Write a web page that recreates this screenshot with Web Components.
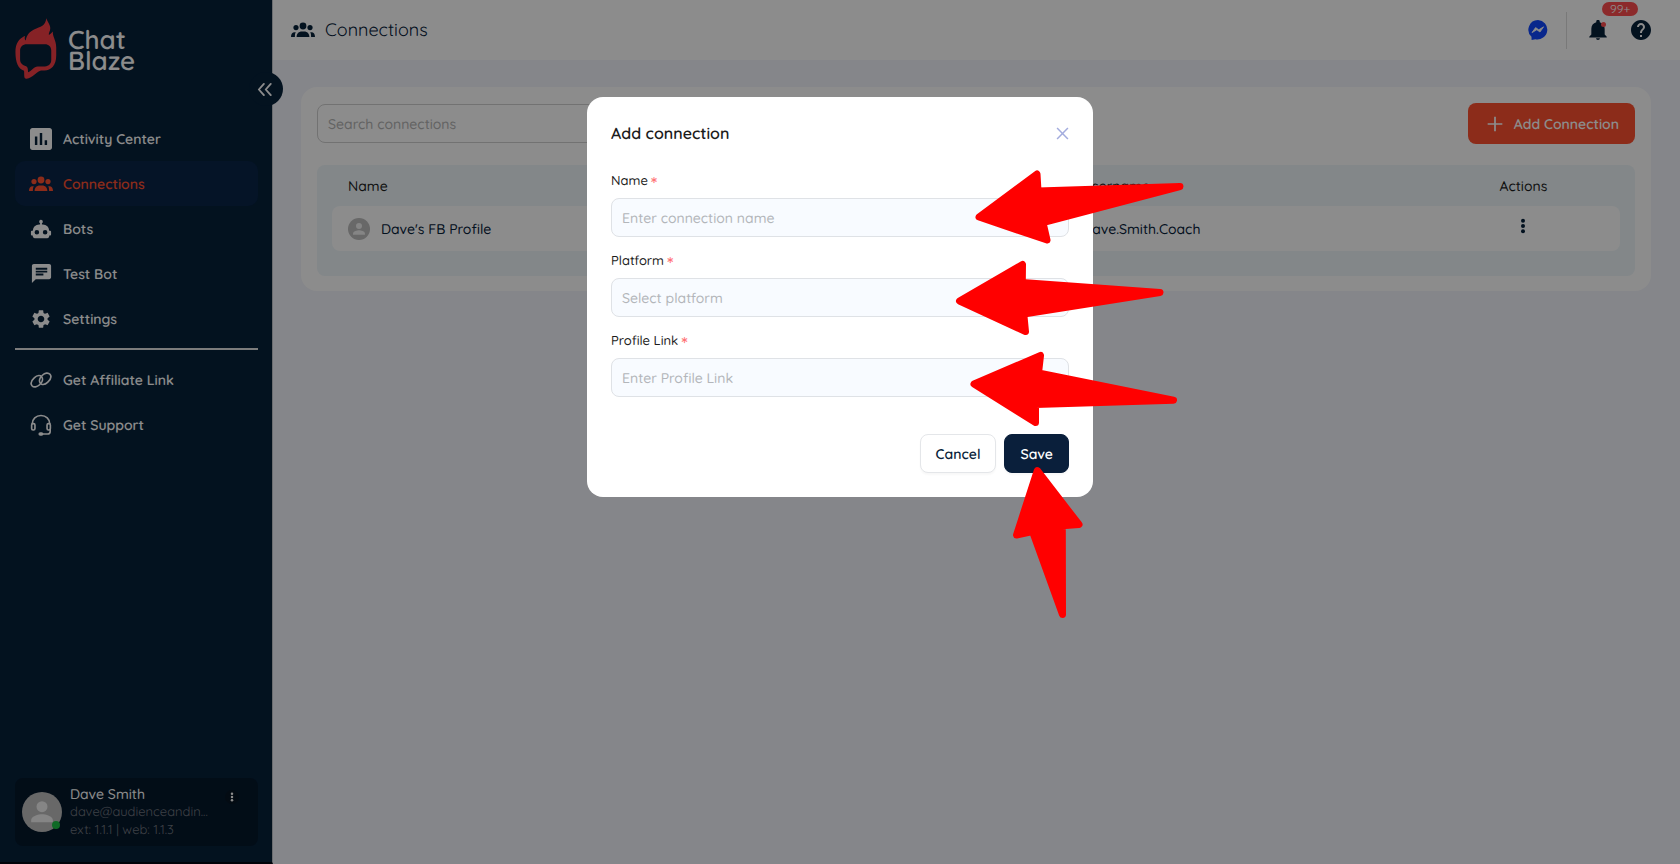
<!DOCTYPE html>
<html lang="en">
<head>
<meta charset="utf-8">
<meta name="viewport" content="width=device-width, initial-scale=1">
<title>Chat Blaze - Connections</title>
<style>
    :root {
        --navy: #0a1f3b;
        --sidebar: #06213a;
        --accent: #ff5130;
        --danger: #ff4d4f;
        --page: #f3f4fb;
        --panel: #eef6fa;
        --line: #dfe2e6;
    }

    body {
        margin: 0;
        font-family: Quicksand, Lato, sans-serif;
        font-size: 14px;
        line-height: 20px;
        text-rendering: geometricPrecision;
        color: #1c1c1c;
        background: var(--page);
    }
</style>
</head>
<body>
<blaze-app></blaze-app>

<script>
(function () {

    const ICONS = {
        chart: ['3 3 18 18', '<path d="M19 3H5c-1.1 0-2 .9-2 2v14c0 1.1.9 2 2 2h14c1.1 0 2-.9 2-2V5c0-1.1-.9-2-2-2zM9 17H7v-7h2v7zm4 0h-2V7h2v10zm4 0h-2v-4h2v4z"/>'],
        people: ['0 0 24 24', '<circle cx="12" cy="8" r="3.4"/><circle cx="5" cy="9.6" r="2.6"/><circle cx="19" cy="9.6" r="2.6"/><path d="M5.6 19c0-3.3 2.2-5.4 5.2-5.4h2.4c3 0 5.2 2.1 5.2 5.4zM0 19c0-3 1.3-4.8 3.6-4.8h1.2C4 15.4 3.9 17 3.9 19zM24 19c0-3-1.3-4.8-3.6-4.8h-1.2c.8 1.2.9 2.8.9 4.8z"/>'],
        robot: ['0 0 24 24', '<path d="M12 2a2 2 0 0 1 2 2c0 .74-.4 1.39-1 1.73V7h1a7 7 0 0 1 7 7h1a1 1 0 0 1 1 1v3a1 1 0 0 1-1 1h-1v1a2 2 0 0 1-2 2H5a2 2 0 0 1-2-2v-1H2a1 1 0 0 1-1-1v-3a1 1 0 0 1 1-1h1a7 7 0 0 1 7-7h1V5.73A2 2 0 0 1 12 2M7.5 13a2.5 2.5 0 1 0 0 5 2.5 2.5 0 0 0 0-5m9 0a2.5 2.5 0 1 0 0 5 2.5 2.5 0 0 0 0-5z"/>'],
        chat: ['0 0 24 24', '<path d="M20 2H4c-1.1 0-2 .9-2 2v18l4-4h14c1.1 0 2-.9 2-2V4c0-1.1-.9-2-2-2zM6 9h12v2H6V9zm8 5H6v-2h8v2zm4-6H6V6h12v2z"/>'],
        gear: ['0 0 24 24', '<path d="M19.14 12.94c.04-.3.06-.61.06-.94 0-.32-.02-.64-.07-.94l2.03-1.58c.18-.14.23-.41.12-.61l-1.92-3.32c-.12-.22-.37-.29-.59-.22l-2.39.96c-.5-.38-1.03-.7-1.62-.94l-.36-2.54c-.04-.24-.24-.41-.48-.41h-3.84c-.24 0-.43.17-.47.41l-.36 2.54c-.59.24-1.13.57-1.62.94l-2.39-.96c-.22-.08-.47 0-.59.22L2.74 8.87c-.12.21-.08.47.12.61l2.03 1.58c-.05.3-.09.63-.09.94s.02.64.07.94l-2.03 1.58c-.18.14-.23.41-.12.61l1.92 3.32c.12.22.37.29.59.22l2.39-.96c.5.38 1.03.7 1.62.94l.36 2.54c.05.24.24.41.48.41h3.84c.24 0 .44-.17.47-.41l.36-2.54c.59-.24 1.13-.56 1.62-.94l2.39.96c.22.08.47 0 .59-.22l1.92-3.32c.12-.22.07-.47-.12-.61l-2.01-1.58zM12 15.6c-1.98 0-3.6-1.62-3.6-3.6s1.62-3.6 3.6-3.6 3.6 1.62 3.6 3.6-1.62 3.6-3.6 3.6z"/>'],
        link: ['0 0 24 24', '<g fill="none" stroke="currentColor" stroke-width="1.8" stroke-linecap="round"><path d="M11.4 7.4C9 6.6 6.6 7.6 4.6 9.6 1.4 12.6.4 16 2.2 18.2c1.9 2.2 5.500 1.600 8.300-1C13.300 14.600 14.600 11 12.800 8.800"/><path d="M12.600 16.600c2.400.8 4.800-.2 6.800-2.200 3.200-3 4.200-6.400 2.400-8.600-1.900-2.200-5.500-1.600-8.300 1C10.700 9.400 9.400 13 11.200 15.200"/></g>'],
        headset: ['0 0 24 24', '<g fill="none" stroke="currentColor" stroke-width="1.8"><path d="M2.4 11C2.4 5.2 6.6 1.6 12 1.6s9.6 3.6 9.6 9.4"/><rect x="1.8" y="10.5" width="3.6" height="7" rx="1.6"/><rect x="18.6" y="10.5" width="3.6" height="7" rx="1.6"/><path d="M22 16v3c0 1.8-1 2.8-2.8 2.8h-6"/></g><rect x="9.2" y="20" width="5.4" height="3.8" rx="1.9"/>'],
        bell: ['0 0 24 24', '<path d="M12 24c1.3 0 2.3-.8 2.3-2H9.7c0 1.2 1 2 2.3 2zM20 17.5v-7c0-4-2.2-7-5.9-7.9V1.9a2.1 2.1 0 0 0-4.2 0v.7C6.2 3.5 4 6.5 4 10.5v7L1.5 20v1h21v-1z"/>'],
        help: ['2 2 20 20', '<path d="M12 2C6.48 2 2 6.48 2 12s4.48 10 10 10 10-4.48 10-10S17.52 2 12 2zm1 17h-2v-2h2v2zm2.07-7.75-.9.92C13.45 12.9 13 13.5 13 15h-2v-.5c0-1.1.45-2.1 1.17-2.83l1.24-1.26c.37-.36.59-.86.59-1.41 0-1.1-.9-2-2-2s-2 .9-2 2H8c0-2.21 1.79-4 4-4s4 1.79 4 4c0 .88-.36 1.68-.93 2.25z"/>'],
        messenger: ['0 0 20 20', '<path fill="#1148ff" d="M10 0a10 9.7 0 1 1-2.6 19.2L3.6 20l-.1-3.2A9.7 9.7 0 0 1 10 0z"/><path d="m4 12.6 3.6-5 3.2 2.2 4.8-3-3.6 5.2-3.2-2.2z" fill="#fff" stroke="#fff" stroke-width=".8" stroke-linejoin="round"/>'],
        person: ['0 0 24 24', '<circle cx="12" cy="8.8" r="3.3"/><path d="M5.5 18.2v-1.4c0-2.4 4.3-3.5 6.5-3.5s6.5 1.1 6.5 3.5v1.4z"/>'],
        kebab: ['0 0 24 24', '<circle cx="12" cy="4" r="3"/><circle cx="12" cy="12" r="3"/><circle cx="12" cy="20" r="3"/>'],
        plus: ['0 0 24 24', '<path d="M12 4v16M4 12h16" fill="none" stroke="currentColor" stroke-width="1.9"/>'],
        close: ['0 0 24 24', '<path d="m2 2 20 20M22 2 2 22" fill="none" stroke="currentColor" stroke-width="2.8"/>'],
        collapse: ['0 0 24 24', '<path d="m11 3-8 9 8 9M22 3l-8 9 8 9" fill="none" stroke="currentColor" stroke-width="3" stroke-linecap="round" stroke-linejoin="round"/>'],
        flame: ['15 18 126 184', '<path fill-rule="evenodd" d="M109 19C113 32 125 42 120 56C118 62 116 65 117 69C121 67 125 63 129 59C127 74 139 85 139 107V131C139 161 124 176 103 176H93C84 177 66 199 50 201C41 202 43 194 42 177C24 171 16 151 16 121C16 99 23 87 33 79C38 75 42 73 45 72C43 78 44 83 47 86C50 70 58 60 72 53C92 44 107 42 109 19ZM50 97C38 97 30 105 30 116V142C30 154 36 160 46 163C53 165 54 170 54 182C64 177 72 165 83 164H105C117 163 124 156 124 144V116C124 104 116 97 105 97Z"/>']
    };

    // Registers an element whose shadow root is a clone of the given markup
    function define(name, html, setup) {
        const template = document.createElement('template');
        template.innerHTML = html;

        window.customElements.define(name, class extends HTMLElement {
            constructor() {
                super();
                this.attachShadow({ mode: 'open' });
                this.shadowRoot.appendChild(template.content.cloneNode(true));
            }

            connectedCallback() {
                if (setup) { setup.call(this, this.shadowRoot); }
            }
        });
    }

    define('blaze-icon', `
        <style>
            :host {
                display: inline-flex;
                flex: none;
                width: var(--size, 24px);
                height: var(--size, 24px);
            }

            svg {
                width: 100%;
                height: 100%;
                fill: currentColor;
            }
        </style>
        <svg aria-hidden="true"></svg>
    `, function (root) {
        const [viewBox, shapes] = ICONS[this.getAttribute('name')];
        const svg = root.querySelector('svg');
        svg.setAttribute('viewBox', viewBox);
        svg.innerHTML = shapes;
    });

    define('blaze-avatar', `
        <style>
            :host {
                display: flex;
                flex: none;
                position: relative;
                width: var(--avatar, 40px);
                height: var(--avatar, 40px);
                border-radius: 50%;
                color: #f2f2f2;
                background: #bdbdbd;
            }

            blaze-icon { --size: 100%; }

            .dot {
                display: none;
                position: absolute;
                right: 2px;
                bottom: 3px;
                width: 8px;
                height: 8px;
                border-radius: 50%;
                background: #1dbf45;
            }

            :host([online]) .dot { display: block; }
        </style>
        <blaze-icon name="person"></blaze-icon>
        <span class="dot"></span>
    `);

    define('nav-item', `
        <style>
            :host { display: block; }

            a {
                display: flex;
                align-items: center;
                gap: 10px;
                height: 45px;
                padding: 0 14px;
                border-radius: 10px;
                color: #fff;
                font-size: 14px;
                font-weight: 600;
                text-decoration: none;
            }

            .icon {
                display: flex;
                justify-content: center;
                width: 24px;
            }

            :host([active]) a {
                color: var(--accent);
                background: #0a2548;
            }
        </style>
        <a href="#"><span class="icon"></span><slot></slot></a>
    `, function (root) {
        const icon = document.createElement('blaze-icon');
        icon.setAttribute('name', this.getAttribute('icon'));
        icon.style.setProperty('--size', this.getAttribute('size') || '24px');
        root.querySelector('.icon').replaceChildren(icon);
    });

    define('user-card', `
        <style>
            :host {
                display: flex;
                align-items: center;
                gap: 8px;
                padding: 7px;
                border-radius: 8px;
                color: #717780;
                background: #05182b;
                font-size: 13px;
                line-height: 18px;
            }

            .info { flex: 1; min-width: 0; }
            .name { color: #fff; font-size: 14px; font-weight: 500; }

            button {
                align-self: flex-start;
                display: flex;
                margin: 5px 12px 0 0;
                padding: 2px;
                border: 0;
                border-radius: 50%;
                color: #fff;
                background: #071523;
                --size: 10px;
            }
        </style>
        <blaze-avatar online></blaze-avatar>
        <div class="info">
            <div class="name">Dave Smith</div>
            <div>dave@audienceandin...</div>
            <div>ext: 1.1.1 | web: 1.1.3</div>
        </div>
        <button type="button" aria-label="Account menu"><blaze-icon name="kebab"></blaze-icon></button>
    `);

    define('side-bar', `
        <style>
            :host {
                display: flex;
                flex-direction: column;
                position: relative;
                box-sizing: border-box;
                width: 273px;
                padding: 18px 14px 16px 15px;
                border-right: 1px solid #c4c6cc;
                border-bottom: 2px solid #000612;
                background: var(--sidebar);
            }

            .logo {
                display: flex;
                align-items: flex-end;
                gap: 11px;
                height: 61px;
                margin-bottom: 37px;
                color: #fff;
                font-size: 26px;
                font-weight: 600;
                line-height: 21px;
            }

            .logo blaze-icon { width: 42px; height: 61px; color: #f43f46; }
            .logo span { width: min-content; padding-bottom: 8px; }

            .collapse {
                position: absolute;
                top: 72px;
                right: -11px;
                display: flex;
                align-items: center;
                width: 34px;
                height: 34px;
                padding: 0 8px;
                border: 0;
                border-radius: 50%;
                color: #fff;
                background: var(--sidebar);
                --size: 15px;
            }

            hr {
                width: 100%;
                height: 2px;
                margin: 7px 0;
                border: 0;
                background: #e2e2e2;
            }

            user-card { margin-top: auto; }
        </style>
        <div class="logo"><blaze-icon name="flame"></blaze-icon><span>Chat Blaze</span></div>
        <button class="collapse" type="button" aria-label="Collapse sidebar"><blaze-icon name="collapse"></blaze-icon></button>
        <nav>
            <nav-item icon="chart" size="22px">Activity Center</nav-item>
            <nav-item icon="people" active>Connections</nav-item>
            <nav-item icon="robot" size="22px">Bots</nav-item>
            <nav-item icon="chat" size="23px">Test Bot</nav-item>
            <nav-item icon="gear" size="22px">Settings</nav-item>
        </nav>
        <hr>
        <nav>
            <nav-item icon="link" size="22px">Get Affiliate Link</nav-item>
            <nav-item icon="headset" size="22px">Get Support</nav-item>
        </nav>
        <user-card></user-card>
    `);

    define('top-bar', `
        <style>
            :host {
                display: flex;
                align-items: center;
                justify-content: space-between;
                box-sizing: border-box;
                height: 60px;
                padding: 0 29px 0 18px;
                color: var(--sidebar);
                background: #fff;
            }

            h1 {
                display: flex;
                align-items: center;
                gap: 10px;
                margin: 0;
                font-size: 18px;
                font-weight: 400;
                line-height: 24px;
            }

            .tools { display: flex; align-items: center; }

            button {
                display: flex;
                position: relative;
                padding: 0;
                border: 0;
                color: inherit;
                background: none;
                font: inherit;
                --size: 20px;
            }

            .rule {
                width: 1px;
                height: 37px;
                margin: 0 21px 0 18px;
                background: #dcdcdc;
            }

            .dot {
                position: absolute;
                top: 2px;
                right: 2px;
                width: 5px;
                height: 5px;
                border-radius: 50%;
                background: var(--danger);
            }

            .badge {
                position: absolute;
                bottom: 24px;
                left: 14px;
                padding: 0 8px;
                border-radius: 8px;
                color: #fff;
                background: var(--danger);
                font-size: 12px;
                line-height: 14px;
            }

            .help { margin-left: 23px; }
        </style>
        <h1><blaze-icon name="people"></blaze-icon><slot></slot></h1>
        <div class="tools">
            <button type="button" aria-label="Messenger"><blaze-icon name="messenger"></blaze-icon></button>
            <span class="rule"></span>
            <button type="button" aria-label="Notifications"><blaze-icon name="bell"></blaze-icon><span class="dot"></span><span class="badge">99+</span></button>
            <button class="help" type="button" aria-label="Help"><blaze-icon name="help"></blaze-icon></button>
        </div>
    `);

    define('connection-table', `
        <style>
            :host {
                display: block;
                padding: 0 15px 25px;
                border-radius: 8px;
                background: var(--panel);
            }

            table {
                width: 100%;
                table-layout: fixed;
                border-spacing: 0;
                font-weight: 500;
            }

            th, td { box-sizing: border-box; padding: 0 16px; }

            th {
                height: 41px;
                font-weight: 500;
                text-align: left;
            }

            td {
                height: 45px;
                color: var(--sidebar);
                background: #fff;
            }

            .name { width: 57%; }
            .actions { width: 15%; text-align: center; }
            td:first-child { border-radius: 8px 0 0 8px; }
            td:last-child { border-radius: 0 8px 8px 0; }

            .person {
                display: flex;
                align-items: center;
                gap: 11px;
                --avatar: 22px;
            }

            button {
                display: inline-flex;
                padding: 0;
                border: 0;
                color: inherit;
                background: none;
                --size: 16px;
            }
        </style>
        <table>
            <thead>
                <tr><th class="name">Name</th><th>Username</th><th class="actions">Actions</th></tr>
            </thead>
            <tbody>
                <tr>
                    <td><span class="person"><blaze-avatar></blaze-avatar>Dave's FB Profile</span></td>
                    <td>Dave.Smith.Coach</td>
                    <td class="actions"><button type="button" aria-label="Row actions"><blaze-icon name="kebab"></blaze-icon></button></td>
                </tr>
            </tbody>
        </table>
    `);

    define('connections-view', `
        <style>
            :host {
                display: block;
                margin: 27px 29px 27px 28px;
                padding: 16px 16px 15px;
                border-radius: 16px;
                background: #fff;
            }

            .bar {
                display: flex;
                align-items: center;
                justify-content: space-between;
                margin-bottom: 21px;
            }

            input {
                box-sizing: border-box;
                width: 320px;
                height: 39px;
                padding: 0 10px;
                border: 1px solid #d0d0d0;
                border-radius: 8px;
                background: none;
                font: 500 14px/20px Quicksand, Lato, sans-serif;
                text-rendering: inherit;
            }

            input::placeholder { color: #b4b4b4; opacity: 1; }

            button {
                display: flex;
                align-items: center;
                gap: 8px;
                height: 41px;
                padding: 0 16px;
                border: 0;
                border-radius: 8px;
                color: #fff;
                background: var(--accent);
                font: 600 14px/20px Quicksand, Lato, sans-serif;
                text-rendering: inherit;
                --size: 22px;
            }
        </style>
        <div class="bar">
            <input type="search" placeholder="Search connections" aria-label="Search connections">
            <button type="button"><blaze-icon name="plus"></blaze-icon>Add Connection</button>
        </div>
        <connection-table></connection-table>
    `);

    define('pointer-arrows', `
        <style>
            :host {
                position: absolute;
                inset: 0;
                pointer-events: none;
            }

            svg {
                display: block;
                width: 100%;
                height: 100%;
                overflow: visible;
                fill: #f00;
                stroke: #f00;
                stroke-width: 7;
                stroke-linejoin: round;
            }
        </style>
        <svg aria-hidden="true">
            <polygon points="392,120 450,77 451,94 593,89.5 456,125.5 460,143"/>
            <polygon points="372.5,204 435.5,167.5 435.3,185.5 573,195.5 436.8,217 438.5,234.5"/>
            <polygon points="387,287 453.5,258.5 451.5,276 586.5,303.3 448.5,307.6 448.5,325.5"/>
            <polygon points="450.3,373.5 492,427.5 475.3,428.8 475.5,517.5 445.5,434.5 429.5,438"/>
        </svg>
    `);

    define('add-dialog', `
        <style>
            :host {
                position: fixed;
                inset: 0;
                display: flex;
                align-items: flex-start;
                justify-content: center;
                padding-top: 97px;
                background: rgba(0, 0, 0, .45);
            }

            form {
                position: relative;
                box-sizing: border-box;
                width: 506px;
                padding: 24px;
                border-radius: 16px;
                background: #fff;
            }

            header {
                display: flex;
                align-items: center;
                justify-content: space-between;
                margin-bottom: 26px;
            }

            h2 { margin: 0; font-size: 16px; font-weight: 600; line-height: 24px; }

            .close {
                display: flex;
                height: auto;
                padding: 0;
                border: 0;
                color: #a3acde;
                background: none;
                box-shadow: none;
                --size: 13px;
            }

            label {
                display: flex;
                gap: 3px;
                height: 20px;
                margin-bottom: 7px;
                font-size: 13px;
                font-weight: 500;
                line-height: 20px;
            }

            label span {
                color: #ff7073;
                font-size: 20px;
                line-height: 26px;
            }

            input, select {
                display: block;
                box-sizing: border-box;
                width: 100%;
                height: 39px;
                margin-bottom: 14px;
                padding: 0 10px;
                border: 1px solid var(--line);
                border-radius: 8px;
                color: #b3b6ba;
                background: #f8fbff;
                appearance: none;
                font: 500 14px/20px Quicksand, Lato, sans-serif;
                text-rendering: inherit;
            }

            input::placeholder { color: #b3b6ba; opacity: 1; }

            footer {
                display: flex;
                justify-content: flex-end;
                gap: 8px;
                padding-top: 23px;
            }

            button {
                height: 39px;
                padding: 0 15px;
                border: 1px solid #e4e6e9;
                border-radius: 8px;
                color: var(--navy);
                background: #fff;
                box-shadow: 0 2px 2px rgba(0, 0, 0, .03);
                font: 600 14px/20px Quicksand, Lato, sans-serif;
                text-rendering: inherit;
            }

            .save { color: #fff; border-color: var(--navy); background: var(--navy); }
        </style>
        <form role="dialog" aria-labelledby="title">
            <header>
                <h2 id="title">Add connection</h2>
                <button class="close" type="button" aria-label="Close"><blaze-icon name="close"></blaze-icon></button>
            </header>
            <label for="name">Name <span>*</span></label>
            <input id="name" type="text" placeholder="Enter connection name">
            <label for="platform">Platform <span>*</span></label>
            <select id="platform"><option>Select platform</option></select>
            <label for="link">Profile Link <span>*</span></label>
            <input id="link" type="text" placeholder="Enter Profile Link">
            <footer>
                <button type="button">Cancel</button>
                <button class="save" type="button">Save</button>
            </footer>
            <pointer-arrows></pointer-arrows>
        </form>
    `);

    define('blaze-app', `
        <style>
            :host { display: flex; min-height: 100vh; }
            side-bar { flex: none; z-index: 1; }
            main { flex: 1; min-width: 0; }
            add-dialog { z-index: 2; }
        </style>
        <side-bar></side-bar>
        <main>
            <top-bar>Connections</top-bar>
            <connections-view></connections-view>
        </main>
        <add-dialog></add-dialog>
    `);

})();
</script>
</body>
</html>
